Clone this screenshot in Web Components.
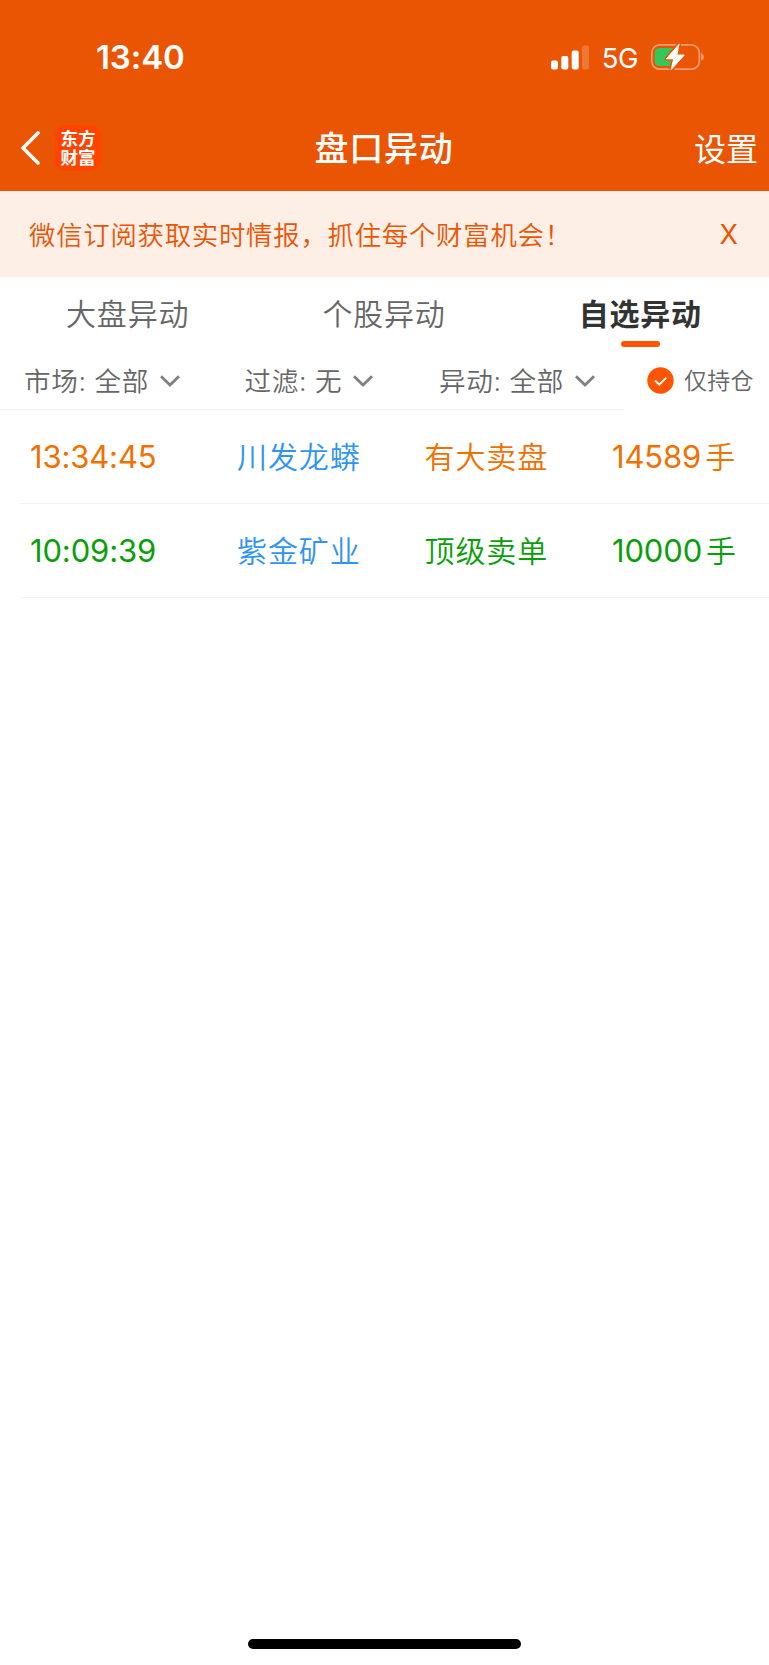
<!DOCTYPE html>
<html lang="zh-CN">
<head>
<meta charset="utf-8">
<title>盘口异动</title>
<style>
    body {
        margin: 0;
        background: #fff;
        color: #666;
        font-family: Inter, "Noto Sans CJK SC", sans-serif;
    }
</style>
</head>
<body>
<move-page></move-page>

<script>
// Status bar: clock, signal, network and battery
class StatusBar extends HTMLElement {
    constructor() {
        super();
        this.attachShadow({ mode: 'open' });
    }

    connectedCallback() {
        this.shadowRoot.innerHTML = `
            <style>
                :host {
                    display: flex;
                    justify-content: space-between;
                    align-items: center;
                    height: 115px;
                    padding: 0 64px 1px 96px;
                    box-sizing: border-box;
                    color: #fff;
                }
                .time { font-size: 33px; font-weight: 600; letter-spacing: -0.1px; line-height: 40px; }
                .right { display: flex; align-items: center; }
                .net { font-size: 27.5px; line-height: 32px; margin: 2px 12px 0 12px; letter-spacing: -0.5px; }
                svg { display: block; }
            </style>
            <span class="time">13:40</span>
            <div class="right">
                <svg width="39" height="25" viewBox="0 0 39 25" fill="#fff">
                    <rect x="0" y="15.5" width="7" height="9" rx="2"/>
                    <rect x="10.3" y="11" width="7" height="13.5" rx="2"/>
                    <rect x="20.7" y="5.5" width="7" height="19" rx="2"/>
                    <rect x="31" y="0.5" width="7" height="24" rx="2" opacity=".2"/>
                </svg>
                <span class="net">5G</span>
                <svg width="55" height="30" viewBox="0 0 55 30">
                    <rect x="1.8" y="2.8" width="47.5" height="24.4" rx="8" fill="none" stroke="#fff" stroke-opacity=".42" stroke-width="1.7"/>
                    <path d="M51.2 11v8q2.7-1.3 2.7-4t-2.7-4z" fill="#fff" opacity=".45"/>
                    <path d="M9.7 6H25v18H9.7Q4.7 24 4.7 19v-8Q4.7 6 9.7 6z" fill="#34c759"/>
                    <path d="M29 2.3 16.4 16.8h7.3L21.2 27.6 34.3 13H26.8z" fill="#fff" stroke="#ea5504" stroke-width="4" stroke-linejoin="round"/>
                    <path d="M29 2.3 16.4 16.8h7.3L21.2 27.6 34.3 13H26.8z" fill="#fff" stroke="#fff" stroke-width="1" stroke-linejoin="round"/>
                </svg>
            </div>
        `;
    }
}
customElements.define('status-bar', StatusBar);

// Title bar with back arrow and app logo
class NavBar extends HTMLElement {
    constructor() {
        super();
        this.attachShadow({ mode: 'open' });
    }

    connectedCallback() {
        this.shadowRoot.innerHTML = `
            <style>
                :host {
                    display: grid;
                    grid-template-columns: 1fr auto 1fr;
                    align-items: center;
                    height: 76px;
                    padding: 0 11px 8px 20px;
                    box-sizing: border-box;
                    color: #fff;
                }
                .left { display: flex; align-items: center; margin-top: -3px; }
                .logo {
                    display: grid;
                    align-content: center;
                    justify-items: center;
                    width: 46px;
                    height: 46px;
                    margin-left: 15px;
                    border-radius: 10px;
                    background: #ff4400;
                    font-size: 17.5px;
                    font-weight: 700;
                    line-height: 19px;
                }
                .title { font-size: 34px; font-weight: 500; letter-spacing: 0.8px; line-height: 48px; margin: 0 10px 0 0; }
                .action { justify-self: end; font-size: 32px; line-height: 48px; margin-top: 1px; }
            </style>
            <div class="left">
                <svg width="20" height="34" viewBox="0 0 20 34" fill="none" stroke="#fff" stroke-width="3.6" stroke-linecap="round" stroke-linejoin="round">
                    <path d="M18 2 3 17 18 32"/>
                </svg>
                <div class="logo"><span>东方</span><span>财富</span></div>
            </div>
            <div class="title"><slot></slot></div>
            <div class="action"><slot name="action"></slot></div>
        `;
    }
}
customElements.define('nav-bar', NavBar);

class NoticeBar extends HTMLElement {
    constructor() {
        super();
        this.attachShadow({ mode: 'open' });
    }

    connectedCallback() {
        this.shadowRoot.innerHTML = `
            <style>
                :host {
                    display: flex;
                    justify-content: space-between;
                    align-items: center;
                    height: 86px;
                    padding: 0 31px 2px 29px;
                    box-sizing: border-box;
                    background: #fdeee6;
                    color: #ea5504;
                    font-size: 26.4px;
                    white-space: nowrap;
                }
                .text { font-weight: 350; letter-spacing: 0.75px; }
                .close { font-size: 27px; margin-top: 2px; }
            </style>
            <span class="text"><slot></slot></span>
            <span class="close">X</span>
        `;
    }
}
customElements.define('notice-bar', NoticeBar);

class TabItem extends HTMLElement {
    constructor() {
        super();
        this.attachShadow({ mode: 'open' });
    }

    connectedCallback() {
        this.shadowRoot.innerHTML = `
            <style>
                :host {
                    display: flex;
                    flex-direction: column;
                    align-items: center;
                    flex: 1;
                    font-size: 30px;
                    font-weight: 350;
                    letter-spacing: 0.8px;
                    line-height: 44px;
                    padding-top: 15px;
                }
                .label { margin-right: 1px; }
                :host([active]) { color: #333; font-weight: 700; }
                :host([active])::after {
                    content: "";
                    width: 39px;
                    height: 6px;
                    margin-top: 5px;
                    border-radius: 3px;
                    background: #ff5500;
                }
            </style>
            <span class="label"><slot></slot></span>
        `;
    }
}
customElements.define('tab-item', TabItem);

class FilterSelect extends HTMLElement {
    constructor() {
        super();
        this.attachShadow({ mode: 'open' });
    }

    connectedCallback() {
        this.shadowRoot.innerHTML = `
            <style>
                :host { display: flex; align-items: center; font-size: 26.6px; font-weight: 350; letter-spacing: 0.6px; white-space: pre; }
                svg { display: block; margin: 3px 0 0 11px; }
            </style>
            <span>${this.getAttribute('label')}: ${this.getAttribute('value')}</span>
            <svg width="20" height="12" viewBox="0 0 20 12" fill="none" stroke="#808080" stroke-width="2.8">
                <path d="M1 1.2 10 10 19 1.2"/>
            </svg>
        `;
    }
}
customElements.define('filter-select', FilterSelect);

class FilterBar extends HTMLElement {
    constructor() {
        super();
        this.attachShadow({ mode: 'open' });
    }

    connectedCallback() {
        this.shadowRoot.innerHTML = `
            <style>
                :host { display: flex; height: 60px; }
                .selects {
                    display: grid;
                    grid-template-columns: 220.5px 194.5px 1fr;
                    width: 624px;
                    padding-left: 24px;
                    box-sizing: border-box;
                    border-bottom: 1px solid #f0f0f0;
                }
                .check { display: flex; align-items: center; padding-left: 23px; font-size: 23px; font-weight: 350; letter-spacing: 0.3px; white-space: nowrap; }
                .check span { margin-top: -2px; }
                .check svg { display: block; margin-right: 10px; }
            </style>
            <div class="selects">
                <filter-select label="市场" value="全部"></filter-select>
                <filter-select label="过滤" value="无"></filter-select>
                <filter-select label="异动" value="全部"></filter-select>
            </div>
            <div class="check">
                <svg width="27" height="27" viewBox="0 0 27 27">
                    <circle cx="13.5" cy="13.5" r="13.2" fill="#ff5500"/>
                    <path d="M8 13.5 12.2 17.6 19.3 10.6" fill="none" stroke="#fff" stroke-width="2"/>
                </svg>
                <span>仅持仓</span>
            </div>
        `;
    }
}
customElements.define('filter-bar', FilterBar);

// One record: time, stock, kind of move, volume
class MoveRow extends HTMLElement {
    constructor() {
        super();
        this.attachShadow({ mode: 'open' });
    }

    connectedCallback() {
        const get = name => this.getAttribute(name);
        this.shadowRoot.innerHTML = `
            <style>
                :host {
                    display: grid;
                    grid-template-columns: 207px 187.5px 187.5px 1fr;
                    align-items: center;
                    height: 94px;
                    margin-left: 20px;
                    padding-left: 10px;
                    box-sizing: border-box;
                    border-bottom: 1px solid #f2f2f2;
                    color: #f07000;
                    font-size: 30px;
                    font-weight: 350;
                    letter-spacing: 0.9px;
                    line-height: 44px;
                    white-space: nowrap;
                }
                :host([kind="down"]) { color: #0a9f0a; }
                .num { font-size: 31px; font-weight: 400; letter-spacing: -0.15px; }
                .stock { color: #3094f2; }
                .unit { margin-left: 4px; }
            </style>
            <span class="num">${get('time')}</span>
            <span class="stock">${get('stock')}</span>
            <span>${get('move')}</span>
            <span><span class="num">${get('volume')}</span><span class="unit">手</span></span>
        `;
    }
}
customElements.define('move-row', MoveRow);

class MovePage extends HTMLElement {
    constructor() {
        super();
        this.attachShadow({ mode: 'open' });
    }

    connectedCallback() {
        this.shadowRoot.innerHTML = `
            <style>
                :host { display: flex; flex-direction: column; height: 1665px; }
                header { background: #ea5504; }
                .tabs { display: flex; height: 73px; }
                .home { width: 273px; height: 10px; margin: auto 248px 16px; border-radius: 5px; background: #000; }
            </style>
            <header>
                <status-bar></status-bar>
                <nav-bar>盘口异动<span slot="action">设置</span></nav-bar>
            </header>
            <notice-bar>微信订阅获取实时情报，抓住每个财富机会！</notice-bar>
            <div class="tabs">
                <tab-item>大盘异动</tab-item>
                <tab-item>个股异动</tab-item>
                <tab-item active>自选异动</tab-item>
            </div>
            <filter-bar></filter-bar>
            <move-row time="13:34:45" stock="川发龙蟒" move="有大卖盘" volume="14589"></move-row>
            <move-row kind="down" time="10:09:39" stock="紫金矿业" move="顶级卖单" volume="10000"></move-row>
            <div class="home"></div>
        `;
    }
}
customElements.define('move-page', MovePage);
</script>
</body>
</html>
